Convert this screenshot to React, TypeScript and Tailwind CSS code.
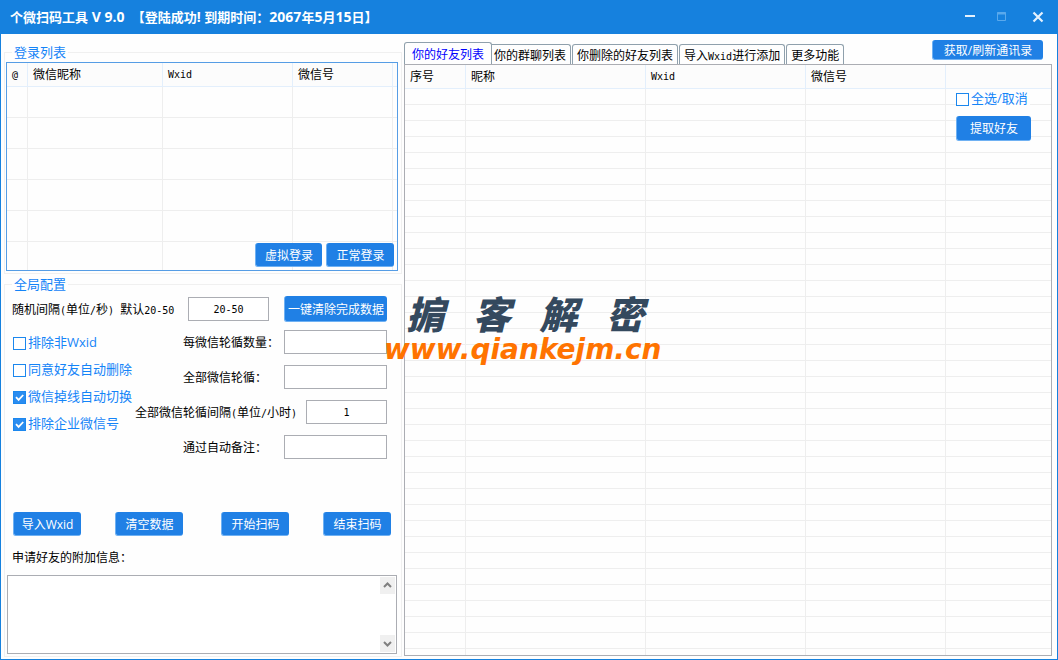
import React from 'react';

const loginColumns = [
  { title: '@', width: 'w-[21px]' },
  { title: '微信昵称', width: 'w-[135px]' },
  { title: 'Wxid', width: 'w-[130px]' },
  { title: '微信号', width: 'w-[100px]' },
  { title: '', width: 'w-auto' },
];

const friendColumns = [
  { title: '序号', width: 'w-[61px]' },
  { title: '昵称', width: 'w-[180px]' },
  { title: 'Wxid', width: 'w-[160px]' },
  { title: '微信号', width: 'w-[140px]' },
  { title: '', width: 'w-auto' },
];

const tabs = ['你的好友列表', '你的群聊列表', '你删除的好友列表', '导入Wxid进行添加', '更多功能'];

// latin characters are half the width of a Chinese one
const halfStyle = "font-['DejaVu_Sans_Mono',monospace] text-[10px] whitespace-pre";

const splitText = (text: string, latinStyle = halfStyle) =>
  text.split(/([\x20-\x7e]+)/).map((part, i) =>
    i % 2 ? <span key={i} className={latinStyle}>{part}</span> : part
  );

const BlueButton = ({ className = '', children }: { className?: string; children: React.ReactNode }) => (
  <button
    type="button"
    className={`flex items-center justify-center rounded-[3px] border-b border-l border-[#6fb1f3] bg-[#2080e5] pt-0.5 text-xs whitespace-nowrap text-white hover:bg-[#3a91ee] ${className}`}
  >
    {children}
  </button>
);

const CheckItem = ({ label, checked = false }: { label: string; checked?: boolean }) => (
  <label className="flex h-5 items-center gap-0.5 text-[13px] whitespace-nowrap text-[#1484f8]">
    <span className="relative flex size-[13px]">
      <input
        type="checkbox"
        defaultChecked={checked}
        className="peer size-[13px] appearance-none border border-[#1b87ee] bg-white checked:bg-[#2a8cf0]"
      />
      <svg className="pointer-events-none absolute inset-0 hidden peer-checked:block" viewBox="0 0 13 13" fill="none" stroke="#fff" strokeWidth="1.8">
        <path d="M3 6.2l2.6 2.7L10.2 4" />
      </svg>
    </span>
    {label}
  </label>
);

const inputStyle =
  "h-6 border border-[#abadb3] bg-white px-1 text-center font-['DejaVu_Sans_Mono',monospace] text-[10px] text-black outline-none focus:border-[#2080e5]";

const FieldRow = ({ id, label, wide = false, value = '' }: { id: string; label: string; wide?: boolean; value?: string }) => (
  <div className="flex items-center justify-end">
    <label htmlFor={id} className={`pt-0.5 whitespace-nowrap ${wide ? 'w-[171px]' : 'w-[101px]'}`}>
      {splitText(label)}
    </label>
    <input id={id} type="text" defaultValue={value} className={`${inputStyle} ${wide ? 'w-[81px]' : 'w-[103px]'}`} />
  </div>
);

type GridProps = {
  columns: { title: string; width: string }[];
  rows: number;
  rowHeight: string;
};

const DataGrid = ({ columns, rows, rowHeight }: GridProps) => (
  <table className="w-full table-fixed border-separate border-spacing-0">
    <thead>
      <tr className="h-6 bg-[#fcfcfc]">
        {columns.map((col, i) => (
          <th
            key={i}
            className={`${col.width} border-b border-[#e3effc] p-0 pl-[5px] text-left font-normal leading-4 ${i < columns.length - 1 ? 'border-r' : ''}`}
          >
            {splitText(col.title)}
          </th>
        ))}
      </tr>
    </thead>
    <tbody>
      {Array.from({ length: rows }, (_, r) => (
        <tr key={r} className={rowHeight}>
          {columns.map((_, i) => (
            <td key={i} className={`border-b border-[#eeeeee] p-0 ${i < columns.length - 1 ? 'border-r' : ''}`} />
          ))}
        </tr>
      ))}
    </tbody>
  </table>
);

const TitleBar = () => (
  <header className="flex h-[34px] shrink-0 items-center justify-between bg-[#1681de] pl-[10px] text-white">
    <h1 className="text-[13px] font-bold whitespace-pre">
      {splitText('个微扫码工具 V 9.0  【登陆成功! 到期时间：2067年5月15日】', 'text-sm')}
    </h1>
    <div className="flex">
      <button type="button" aria-label="最小化" className="flex h-[34px] w-8 items-center justify-center">
        <svg width="12" height="12" viewBox="0 0 12 12"><path d="M1 5h10" stroke="#e4f1fd" strokeWidth="2" /></svg>
      </button>
      <button type="button" aria-label="最大化" disabled className="flex h-[34px] w-8 items-center justify-center">
        <svg width="10" height="12" viewBox="0 0 10 12" fill="none" stroke="#5aa9ec">
          <path d="M.5 1.5h8v8h-8z" />
          <path d="M0 2.5h9" strokeWidth="2" />
        </svg>
      </button>
      <button type="button" aria-label="关闭" className="flex h-[34px] w-10 items-center justify-center">
        <svg width="12" height="12" viewBox="0 0 12 12"><path d="M1.5 1.5l9 9M10.5 1.5l-9 9" stroke="#e4f1fd" strokeWidth="2.2" /></svg>
      </button>
    </div>
  </header>
);

const LoginGroup = () => (
  <fieldset className="shrink-0 border border-[#f0f0f0] pr-[3px] pb-0.5 pl-px">
    <legend className="ml-1.5 h-5 px-0.5 text-[13px] leading-5 text-[#1484f8]">登录列表</legend>
    <div className="relative h-[209px] overflow-hidden border border-[#569de5]">
      <DataGrid columns={loginColumns} rows={6} rowHeight="h-[31px]" />
      <div className="absolute right-[3px] bottom-[3px] flex gap-1">
        <BlueButton className="h-6 w-[67px]">虚拟登录</BlueButton>
        <BlueButton className="h-6 w-[68px]">正常登录</BlueButton>
      </div>
    </div>
  </fieldset>
);

const ScrollButton = ({ label, path }: { label: string; path: string }) => (
  <button type="button" aria-label={label} className="flex h-[17px] w-[15px] items-center justify-center bg-[#f0f0f0]">
    <svg width="9" height="7" viewBox="0 0 9 7" fill="none" stroke="#808080" strokeWidth="2">
      <path d={path} />
    </svg>
  </button>
);

const ConfigGroup = () => (
  <fieldset className="flex flex-1 flex-col border border-[#f0f0f0] pr-1 pb-0.5 pl-0.5">
    <legend className="ml-[5px] h-5 px-0.5 text-[13px] leading-5 text-[#1484f8]">全局配置</legend>

    <div className="mt-0.5 flex h-[26px] items-center pr-[10px] pl-[5px]">
      <label htmlFor="interval" className="w-44 pt-0.5 whitespace-nowrap">
        {splitText('随机间隔(单位/秒) 默认20-50')}
      </label>
      <input id="interval" type="text" defaultValue="20-50" className={`${inputStyle} w-[81px]`} />
      <BlueButton className="ml-auto h-[26px] w-[103px]">一键清除完成数据</BlueButton>
    </div>

    <div className="mt-2 flex justify-between pr-[10px] pl-1.5">
      <div className="flex flex-col gap-[7px] pt-[3px]">
        <CheckItem label="排除非Wxid" />
        <CheckItem label="同意好友自动删除" />
        <CheckItem label="微信掉线自动切换" checked />
        <CheckItem label="排除企业微信号" checked />
      </div>
      <div className="flex flex-col gap-[11px]">
        <FieldRow id="per-count" label="每微信轮循数量：" />
        <FieldRow id="all-loop" label="全部微信轮循：" />
        <FieldRow id="all-interval" label="全部微信轮循间隔(单位/小时)" wide value="1" />
        <FieldRow id="remark" label="通过自动备注：" />
      </div>
    </div>

    <div className="mt-auto flex justify-between pr-1.5 pl-1.5">
      <div className="flex gap-[34px]">
        <BlueButton className="h-6 w-[68px]">导入Wxid</BlueButton>
        <BlueButton className="h-6 w-[68px]">清空数据</BlueButton>
      </div>
      <div className="flex gap-[34px]">
        <BlueButton className="h-6 w-[68px]">开始扫码</BlueButton>
        <BlueButton className="h-6 w-[68px]">结束扫码</BlueButton>
      </div>
    </div>

    <label htmlFor="message" className="mt-3 pl-[5px] leading-5">申请好友的附加信息：</label>
    <div className="mt-[7px] flex h-[79px] border border-[#abadb3] bg-white p-px">
      <textarea id="message" className="min-w-0 flex-1 resize-none overflow-hidden outline-none" />
      <div className="flex flex-col justify-between">
        <ScrollButton label="向上滚动" path="M1 5l3.5-3.5L8 5" />
        <ScrollButton label="向下滚动" path="M1 2l3.5 3.5L8 2" />
      </div>
    </div>
  </fieldset>
);

const FriendPanel = () => (
  <section className="flex min-w-0 flex-1 flex-col">
    <div className="flex h-[30px] shrink-0 justify-between pr-[9px]">
      <div role="tablist" className="flex items-end gap-px">
        {tabs.map((tab, i) => (
          <button
            key={tab}
            type="button"
            role="tab"
            aria-selected={i === 0}
            className={`rounded-t-[3px] border border-b-0 border-[#8fa0ac] pt-0.5 whitespace-nowrap ${
              i === 0 ? 'z-10 -mr-1 h-[22px] bg-[#fefefe] px-[7px] text-[#0000ff]' : 'h-5 px-1'
            }`}
          >
            {splitText(tab)}
          </button>
        ))}
      </div>
      <BlueButton className="mt-1.5 h-5 w-[111px]">获取/刷新通讯录</BlueButton>
    </div>
    <div className="relative min-h-0 flex-1 overflow-hidden border border-[#abadb3]">
      <DataGrid columns={friendColumns} rows={36} rowHeight="h-4" />
      <div className="absolute top-6 right-5 flex flex-col items-start gap-[7px]">
        <div className="bg-[#fefefe] pr-0.5">
          <CheckItem label="全选/取消" />
        </div>
        <BlueButton className="h-[25px] w-[75px]">提取好友</BlueButton>
      </div>
    </div>
  </section>
);

const Watermark = () => (
  <div className="pointer-events-none absolute top-[290px] left-[384px] font-bold italic">
    <div className="flex w-[260px] justify-between pl-[22px] text-[38px] leading-[48px] font-black text-[#34495e]">
      <span>掮</span>
      <span>客</span>
      <span>解</span>
      <span>密</span>
    </div>
    <div className="font-['DejaVu_Sans',sans-serif] text-[28px] leading-6 text-[#ff7300]">www.qiankejm.cn</div>
  </div>
);

const App = () => {
  return (
    <div className="relative flex h-screen min-h-[600px] flex-col overflow-hidden bg-[#fefefe] font-['Open_Sans','Noto_Sans_CJK_SC',sans-serif] text-xs text-black">
      <TitleBar />
      <main className="flex min-h-0 flex-1 gap-0.5 border-x border-b border-[#1681de] pr-[5px] pl-[3px]">
        <div className="flex w-[398px] shrink-0 flex-col pt-2 pb-0.5">
          <LoginGroup />
          <ConfigGroup />
        </div>
        <div className="flex min-w-0 flex-1 pb-[3px]">
          <FriendPanel />
        </div>
      </main>
      <Watermark />
    </div>
  );
};

export default App;
